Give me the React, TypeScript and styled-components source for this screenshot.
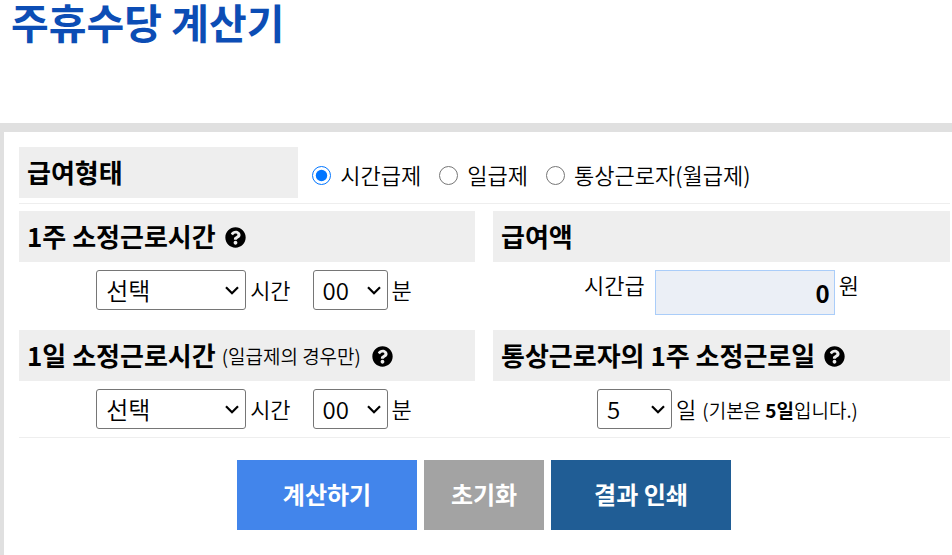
import React from 'react';
import styled, { createGlobalStyle } from 'styled-components';
import { FaQuestionCircle } from 'react-icons/fa';

const Global = createGlobalStyle`
  * { box-sizing: border-box; }
  body {
    margin: 0;
    background: #fff;
    color: #000;
    font-family: "Noto Sans CJK KR", sans-serif;
    font-size: 22px;
    font-weight: 350;
  }
  b { font-weight: 700; }
`;

const Title = styled.h1`
  margin: 0;
  padding: 0 0 81px 11px;
  font-size: 41px;
  line-height: 42px;
  font-weight: 700;
  color: #0c4db5;
`;

const Panel = styled.form`
  border: solid #e0e0e0;
  border-width: 9px 0 0 4px;
  padding: 15px 2px 25px 15px;
`;

const TypeRow = styled.div`
  display: flex;
  align-items: center;
  margin-bottom: 7px;
  padding-bottom: 5px;
  border-bottom: 1px solid #eee;
`;

const Heading = styled.h2`
  display: flex;
  align-items: center;
  gap: 4px;
  margin: 0;
  padding: 0 0 2px 8px;
  height: 51px;
  background: #eee;
  font-size: 26px;
  line-height: 36px;
  font-weight: 700;
  white-space: nowrap;
`;

const TypeHeading = styled(Heading)`
  width: 30%;
`;

const HelpIcon = styled(FaQuestionCircle)`
  width: 21px;
  height: 21px;
  margin: 4px 0 0 5px;
`;

const Options = styled.div`
  display: flex;
  gap: 18px;
  padding: 2px 0 0 14px;
`;

const Option = styled.label`
  display: flex;
  align-items: center;
  gap: 9px;
  line-height: 30px;
  white-space: nowrap;
`;

const Radio = styled.input`
  width: 19px;
  height: 19px;
  margin: 4px 0 0;
`;

const Grid = styled.div`
  display: grid;
  grid-template-columns: 456fr 457fr;
  gap: 12px 18px;
  border-bottom: 1px solid #eee;
`;

const Fields = styled.div`
  display: flex;
  align-items: flex-start;
  justify-content: center;
  gap: 4px;
  min-height: 56px;
  padding: 8px 0 0 14px;
  line-height: 38px;
  white-space: nowrap;
`;

const AmountFields = styled(Fields)`
  padding-left: 0;
  line-height: 28px;
`;

const AmountLabel = styled.label`
  margin-right: 6px;
`;

const Hours = styled.span`
  margin-right: 18px;
`;

const Note = styled.small`
  padding: 2px 2px 0;
  font-size: 19px;
  font-weight: 350;
`;

const SelectBox = styled.span<{ $w: number }>`
  display: grid;
  align-items: center;
  width: ${(p) => p.$w}px;
  height: 40px;

  > * { grid-area: 1 / 1; }
`;

const SelectInput = styled.select`
  width: 100%;
  height: 40px;
  padding: 0 0 4px 9px;
  border: 1px solid #767676;
  border-radius: 3px;
  background: #fff;
  color: #000;
  font: inherit;
  font-size: 24px;
  font-weight: 350;
  appearance: none;
`;

const Chevron = styled.svg`
  justify-self: end;
  width: 14px;
  height: 9px;
  margin-right: 7px;
  fill: none;
  stroke: #000;
  stroke-width: 2.2;
  pointer-events: none;
`;

const Amount = styled.input`
  width: 180px;
  height: 45px;
  padding: 0 4px;
  border: 1px solid #aacdf9;
  background: #ebeff6;
  font: inherit;
  font-size: 24px;
  font-weight: 700;
  text-align: right;
`;

const Actions = styled.div`
  display: flex;
  justify-content: center;
  gap: 7px;
  padding: 22px 1px 0 0;
`;

const Action = styled.button<{ $w: number; $bg: string }>`
  width: ${(p) => p.$w}px;
  height: 70px;
  padding: 0 0 4px;
  border: 0;
  background: ${(p) => p.$bg};
  color: #fff;
  font: inherit;
  font-size: 24px;
  font-weight: 700;
`;

function Select({ label, width, options }: { label: string; width: number; options: string[] }) {
  return (
    <SelectBox $w={width}>
      <SelectInput aria-label={label}>
        {options.map((o) => <option key={o}>{o}</option>)}
      </SelectInput>
      <Chevron viewBox="0 0 14 9" aria-hidden="true"><path d="M1 1.2 7 7.2l6-6" /></Chevron>
    </SelectBox>
  );
}

function Duration({ label }: { label: string }) {
  return (
    <Fields>
      <Select width={150} label={`${label} 시간`} options={['선택', '1', '2', '3', '4', '5', '6', '7', '8']} />
      <Hours>시간</Hours>
      <Select width={75} label={`${label} 분`} options={['00', '10', '20', '30', '40', '50']} />
      <span>분</span>
    </Fields>
  );
}

export default function App() {
  return (
    <>
      <Global />
      <Title>주휴수당 계산기</Title>
      <Panel>
        <TypeRow role="radiogroup" aria-labelledby="pay-type">
          <TypeHeading id="pay-type">급여형태</TypeHeading>
          <Options>
            <Option><Radio type="radio" name="type" value="hour" defaultChecked />시간급제</Option>
            <Option><Radio type="radio" name="type" value="day" />일급제</Option>
            <Option><Radio type="radio" name="type" value="month" />통상근로자(월급제)</Option>
          </Options>
        </TypeRow>
        <Grid>
          <section>
            <Heading>1주 소정근로시간<HelpIcon /></Heading>
            <Duration label="1주" />
          </section>
          <section>
            <Heading>급여액</Heading>
            <AmountFields>
              <AmountLabel htmlFor="amount">시간급</AmountLabel>
              <Amount id="amount" inputMode="numeric" defaultValue="0" />
              <span>원</span>
            </AmountFields>
          </section>
          <section>
            <Heading>1일 소정근로시간<Note>(일급제의 경우만)</Note><HelpIcon /></Heading>
            <Duration label="1일" />
          </section>
          <section>
            <Heading>통상근로자의 1주 소정근로일<HelpIcon /></Heading>
            <Fields>
              <Select width={75} label="1주 소정근로일" options={['5', '6', '4', '3', '2', '1']} />
              <span>일</span>
              <Note>(기본은 <b>5일</b>입니다.)</Note>
            </Fields>
          </section>
        </Grid>
        <Actions>
          <Action type="button" $w={180} $bg="#4285eb">계산하기</Action>
          <Action type="reset" $w={120} $bg="#a3a3a3">초기화</Action>
          <Action type="button" $w={180} $bg="#205d95">결과 인쇄</Action>
        </Actions>
      </Panel>
    </>
  );
}
